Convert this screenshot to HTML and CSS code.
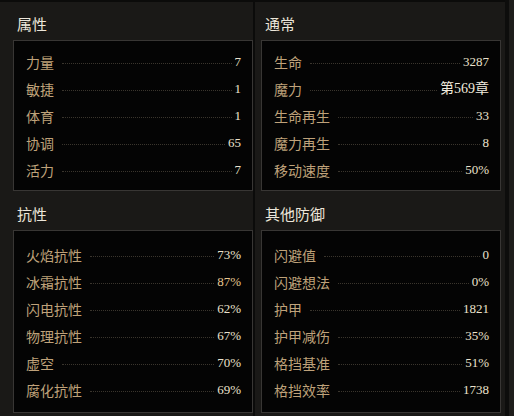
FILE: index.html
```html
<!DOCTYPE html>
<html lang="zh-CN">

<head>
    <meta charset="UTF-8">
    <title>属性</title>
    <link rel="stylesheet" href="styles.css">
</head>

<body>
    <div class="page">
        <div class="sheet">
            <!-- 属性 -->
            <div class="section left">
                <div class="title">属性</div>
                <div class="box top-box">
                    <div class="row"><span class="label">力量</span><span class="dots"></span><span class="value">7</span></div>
                    <div class="row"><span class="label">敏捷</span><span class="dots"></span><span class="value">1</span></div>
                    <div class="row"><span class="label">体育</span><span class="dots"></span><span class="value">1</span></div>
                    <div class="row"><span class="label">协调</span><span class="dots"></span><span class="value">65</span></div>
                    <div class="row"><span class="label">活力</span><span class="dots"></span><span class="value">7</span></div>
                </div>
            </div>
            <!-- 通常 -->
            <div class="section right">
                <div class="title">通常</div>
                <div class="box top-box">
                    <div class="row"><span class="label">生命</span><span class="dots"></span><span class="value">3287</span></div>
                    <div class="row"><span class="label">魔力</span><span class="dots"></span><span class="value bright">第569章</span></div>
                    <div class="row"><span class="label">生命再生</span><span class="dots"></span><span class="value">33</span></div>
                    <div class="row"><span class="label">魔力再生</span><span class="dots"></span><span class="value">8</span></div>
                    <div class="row"><span class="label">移动速度</span><span class="dots"></span><span class="value">50%</span></div>
                </div>
            </div>
            <!-- 抗性 -->
            <div class="section left">
                <div class="title">抗性</div>
                <div class="box bottom-box">
                    <div class="row"><span class="label">火焰抗性</span><span class="dots"></span><span class="value">73%</span></div>
                    <div class="row"><span class="label">冰霜抗性</span><span class="dots"></span><span class="value gold">87%</span></div>
                    <div class="row"><span class="label">闪电抗性</span><span class="dots"></span><span class="value">62%</span></div>
                    <div class="row"><span class="label">物理抗性</span><span class="dots"></span><span class="value">67%</span></div>
                    <div class="row"><span class="label">虚空</span><span class="dots"></span><span class="value">70%</span></div>
                    <div class="row"><span class="label">腐化抗性</span><span class="dots"></span><span class="value">69%</span></div>
                </div>
            </div>
            <!-- 其他防御 -->
            <div class="section right">
                <div class="title">其他防御</div>
                <div class="box bottom-box">
                    <div class="row"><span class="label">闪避值</span><span class="dots"></span><span class="value">0</span></div>
                    <div class="row"><span class="label">闪避想法</span><span class="dots"></span><span class="value">0%</span></div>
                    <div class="row"><span class="label">护甲</span><span class="dots"></span><span class="value">1821</span></div>
                    <div class="row"><span class="label">护甲减伤</span><span class="dots"></span><span class="value">35%</span></div>
                    <div class="row"><span class="label">格挡基准</span><span class="dots"></span><span class="value">51%</span></div>
                    <div class="row"><span class="label">格挡效率</span><span class="dots"></span><span class="value">1738</span></div>
                </div>
            </div>
        </div>
        <div class="scroll">
            <div class="scroll-track"></div>
        </div>
    </div>
</body>

</html>
```

FILE: styles.css
```css
* {
    margin: 0;
    padding: 0;
    box-sizing: border-box;
}

body {
    width: 514px;
    height: 416px;
    overflow: hidden;
    background-color: #141311;
    font-family: "Noto Sans CJK SC", "Noto Sans", sans-serif;
}

.page {
    display: flex;
    height: 416px;
}

.sheet {
    width: 505px;
    display: grid;
    grid-template-columns: 253px 250px;
    grid-template-rows: 190px 224px;
    column-gap: 2px;
    padding-top: 2px;
    background-color: #0b0b0a;
}

.section {
    background-color: #1a1917;
}

.section.left {
    padding-left: 13px;
}

.section.right {
    padding-left: 6px;
}

.title {
    height: 38px;
    padding: 13px 0 0 4px;
    font-size: 15px;
    line-height: 18px;
    color: #ece6da;
}

.box {
    width: 240px;
    background-color: #040404;
    border: 1px solid #383634;
    padding-left: 12px;
    padding-right: 11px;
}

.top-box {
    padding-top: 7px;
    padding-bottom: 7px;
}

.bottom-box {
    padding-top: 10px;
    padding-bottom: 9px;
}

.row {
    height: 27px;
    display: flex;
    align-items: center;
}

.label {
    font-size: 14px;
    line-height: 18px;
    color: #bfa27a;
}

.dots {
    flex: 1;
    margin: 4px 3px 0 8px;
    border-bottom: 1px dotted #3a352d;
}

.value {
    font-family: "Liberation Serif", "Noto Sans CJK SC", serif;
    font-size: 13px;
    line-height: 18px;
    color: #ebe2cd;
}

.value.bright {
    font-size: 14px;
    color: #f1ebde;
}

.value.gold {
    color: #e6c790;
}

.scroll {
    flex: 1;
    display: flex;
    background-color: #0d0d0c;
}

.scroll-track {
    width: 5px;
    margin-left: 4px;
    background-color: #1e1d1b;
}
```
